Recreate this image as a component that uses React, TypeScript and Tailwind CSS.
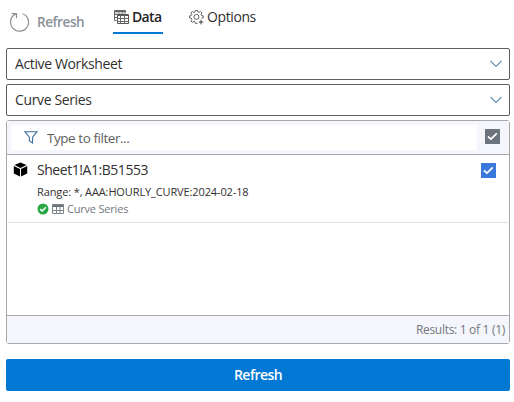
import React from "react";

function RefreshIcon() {
  return (
    <svg width="22" height="22" viewBox="0 0 22 22" fill="none" stroke="#8a9097" strokeWidth="1.2">
      <path d="M13.6 2.7A9 9 0 1 1 7 2.9" />
      <path d="M2.6 2.5H7.5V7.2" />
    </svg>
  );
}

function TablesIcon() {
  return (
    <svg width="15" height="15" viewBox="0 0 15 15" fill="none" strokeWidth="1">
      <path d="M2.5 10.5H.5V.5H11.5V3M.5 1.5H11.5M.5 4.5H3M.5 7.5H3" stroke="#666" />
      <path d="M1 3H11.5M5 2V4M8.5 2V4" stroke="#999" />
      <path d="M3.5 4.5H14.5V13.5H3.5ZM3.5 5.5H14.5" stroke="#555" />
      <path d="M3.5 8.5H14.5M3.5 11.5H14.5M6.5 5V14M10.5 5V14" stroke="#666" />
    </svg>
  );
}

function GearIcon() {
  return (
    <svg width="15" height="15" viewBox="0 0 15 15" fill="none" stroke="#606060" strokeWidth="1">
      <path d="M8.4 13.4H6.4L6 11.8 4.9 11.3 3.3 12.3 1.9 10.9 2.8 9.4 2.3 8.2.6 7.8V5.9L2.3 5.5 2.8 4.3 1.9 2.8 3.3 1.5 4.9 2.4 6 1.9 6.4.5H8.4L8.8 1.9 10 2.4 11.5 1.5 12.9 2.8 12 4.3 12.5 5.5 14.2 5.9V7.8L12.5 8.2" />
      <circle cx="7.4" cy="6.9" r="2.5" />
      <path d="M12 9.8V14.4M9.7 12.1H14.3" stroke="#404040" />
    </svg>
  );
}

function Chevron() {
  return (
    <svg width="12" height="8" viewBox="0 0 12 8" fill="none" stroke="#5f94b8" strokeWidth="1.1">
      <path d="M.5 1 6 6.5 11.5 1" />
    </svg>
  );
}

function Check({ className }: { className: string }) {
  return (
    <span className={"flex h-[15px] w-[15px] shrink-0 items-center justify-center " + className}>
      <svg width="11" height="9" viewBox="0 0 11 9" fill="none" stroke="white" strokeWidth="1.7">
        <path d="M1 4.5 4 7.2 9.8 1.4" />
      </svg>
    </span>
  );
}

function Select({ text }: { text: string }) {
  return (
    <div className="flex h-8 items-center justify-between rounded-[2px] border border-[#605e5c] bg-white pr-[7px] pl-2">
      <span className="text-[14px] tracking-[-0.37px] text-[#323130]">{text}</span>
      <Chevron />
    </div>
  );
}

export default function App() {
  return (
    <div className="flex h-[402px] w-[514px] flex-col bg-white pr-1 pl-1.5 font-['Open_Sans','Noto_Sans',sans-serif] leading-5 whitespace-nowrap">
      <header className="flex h-12 shrink-0 items-start">
        <div className="flex w-[107px] items-center pt-[11px] pl-[3px] text-[#8a9097]">
          <RefreshIcon />
          <span className="ml-1.5 text-[13.5px] font-semibold tracking-[-0.4px]">Refresh</span>
        </div>
        <div className="flex h-[34px] w-[50px] items-start border-b-2 border-[#0078d4] pt-[7px] pl-px">
          <span className="mt-[3px]"><TablesIcon /></span>
          <span className="ml-[3px] text-[14px] font-semibold tracking-[-0.65px] text-[#242424]">Data</span>
        </div>
        <div className="flex items-start pt-[7px] pl-[26px]">
          <span className="mt-[3px]"><GearIcon /></span>
          <span className="ml-[3px] text-[14px] tracking-[-0.4px] text-[#323130]">Options</span>
        </div>
      </header>
      <div className="flex flex-col gap-1">
        <Select text="Active Worksheet" />
        <Select text="Curve Series" />
        <section className="flex h-[224px] flex-col rounded-[3px] border border-[#a6a8aa]">
          <div className="flex h-[34px] shrink-0 items-center border-b border-[#a6a8aa] bg-[#f4f6fb] pl-1">
            <div className="flex h-[25px] w-[466px] items-center bg-white pl-[13px]">
              <svg width="14" height="13" viewBox="0 0 14 13" fill="none" stroke="#3f6f9f" strokeWidth="1.1">
                <path d="M.9.7H13.1L8.6 6.2V12L5.4 10V6.2Z" />
              </svg>
              <span className="ml-[9px] text-[13.5px] tracking-[-0.45px] text-[#605e5c]">Type to filter...</span>
            </div>
            <Check className="mb-[3px] ml-2 bg-[#6c757d]" />
          </div>
          <div className="mx-px flex h-[68px] shrink-0 border-b border-[#e1e1e1] pl-[5px]">
            <svg className="mt-[7px] shrink-0" width="15" height="15" viewBox="0 0 15 15" fill="#000">
              <path d="M7.5.5 13.5 3.1 7.5 5.9 1.5 3.1ZM.8 4.1 7 7V14.6L.8 11.6ZM14.2 4.1 8 7V14.6L14.2 11.6Z" />
            </svg>
            <div className="ml-[9px] flex flex-1 flex-col">
              <span className="mt-[5px] text-[14px] tracking-[-0.45px] text-[#323130]">Sheet1!A1:B51553</span>
              <span className="mt-[2px] h-[19px] text-[11px] tracking-[-0.12px] text-[#323130]">Range: *, AAA:HOURLY_CURVE:2024-02-18</span>
              <div className="flex h-4 items-center">
                <svg width="12" height="12" viewBox="0 0 12 12">
                  <circle cx="6" cy="6" r="5.5" fill="#28a745" />
                  <path d="M3.2 6.1 5.2 8 8.8 4.3" fill="none" stroke="white" strokeWidth="1.6" />
                </svg>
                <svg className="ml-[3px]" width="12" height="10" viewBox="0 0 12 10" fill="none" stroke="#7d848b">
                  <path d="M.5 1.5H11.5" stroke="#6c757d" strokeWidth="3" />
                  <path d="M.5.5H11.5V9.5H.5ZM.5 6.5H11.5M4.5 3V9M8 3V9" />
                </svg>
                <span className="ml-[3px] text-[11px] tracking-[-0.2px] text-[#73787e]">Curve Series</span>
              </div>
            </div>
            <Check className="mt-2 mr-[12px] bg-[#3b78dc]" />
          </div>
          <div className="flex-1" />
          <div className="flex h-7 shrink-0 items-center justify-end border-t border-[#a6a8aa] bg-[#f4f6fb] pr-1 text-[12px] tracking-[-0.3px] text-[#73787e]">Results: 1 of 1 (1)</div>
        </section>
      </div>
      <button className="mt-[15px] flex h-8 shrink-0 items-center justify-center rounded-[2px] bg-[#0078d4] text-[14px] font-semibold tracking-[-0.55px] text-white">Refresh</button>
    </div>
  );
}
